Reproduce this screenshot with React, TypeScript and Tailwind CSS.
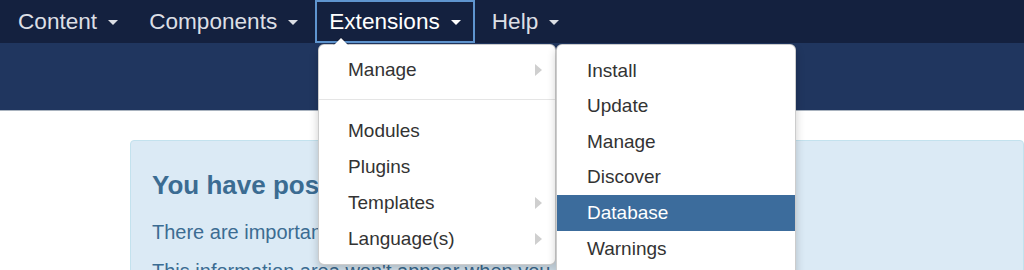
const navItems = [
  { label: "Content", active: false },
  { label: "Components", active: false },
  { label: "Extensions", active: true },
  { label: "Help", active: false },
];

const mainMenu = ["Modules", "Plugins", "Templates", "Language(s)"];
const withSub = ["Templates", "Language(s)"];
const subMenu = ["Install", "Update", "Manage", "Discover", "Database", "Warnings"];

function Caret({ light }: { light: boolean }) {
  return (
    <span
      className={
        "ml-[11px] mt-[2px] inline-block h-0 w-0 border-x-[5px] border-t-[5px] border-x-transparent " +
        (light ? "border-t-white" : "border-t-[#dcdfe5]")
      }
    />
  );
}

function SubArrow() {
  return (
    <span className="inline-block h-0 w-0 border-y-[6px] border-l-[7px] border-y-transparent border-l-[#cfcfcf]" />
  );
}

export default function App() {
  return (
    <div
      className="relative h-[270px] w-[1024px] overflow-hidden bg-white"
      style={{ fontFamily: '"Liberation Sans", Arial, sans-serif' }}
    >
      {/* top navbar */}
      <nav className="flex h-[43px] items-stretch bg-[#14213f] pl-[4px]">
        {navItems.map((item) => (
          <div
            key={item.label}
            className={
              "mr-[3px] flex items-center border-2 px-[12px] text-[22.6px] " +
              (item.active
                ? "border-[#5f95cf] text-white"
                : "border-transparent text-[#dcdfe5]")
            }
          >
            {item.label}
            <Caret light={item.active} />
          </div>
        ))}
      </nav>

      {/* header strip */}
      <div className="h-[68px] border-b border-[#a9b3bf] bg-[#20365f]" />

      {/* alert */}
      <div className="ml-[130px] mt-[29px] rounded-[4px] border border-[#c3e2ee] bg-[#dbeaf5] pl-[21px] pt-[29px] text-[#3b6c92]">
        <h2 className="h-[30px] text-[26px] font-bold leading-[30px] whitespace-nowrap">
          You have post-installation messages
        </h2>
        <p className="mt-[18px] text-[20px] leading-[28px] whitespace-nowrap">
          There are important post-installation messages
        </p>
        <p className="mt-[11px] text-[20px] leading-[28px] whitespace-nowrap">
          This information area won't appear when you hide all
        </p>
      </div>

      {/* Extensions dropdown */}
      <div className="absolute left-[318px] top-[44px] w-[238px] rounded-[6px] border border-[rgba(0,0,0,0.2)] bg-white pb-[7px] pt-[7px] text-[19px] text-[#333] shadow-[0_5px_10px_rgba(0,0,0,0.2)]">
        <span className="absolute -top-[8px] left-[14px] h-0 w-0 border-x-[8px] border-b-[8px] border-x-transparent border-b-[rgba(0,0,0,0.2)]" />
        <span className="absolute -top-[7px] left-[15px] h-0 w-0 border-x-[7px] border-b-[7px] border-x-transparent border-b-white" />
        <div className="flex h-[36px] items-center justify-between pl-[29px] pr-[13px]">
          <span>Manage</span>
          <SubArrow />
        </div>
        <div className="mb-[13px] mt-[11px] h-px bg-[#e5e5e5]" />
        {mainMenu.map((m) => (
          <div key={m} className="flex h-[36px] items-center justify-between pl-[29px] pr-[13px]">
            <span>{m}</span>
            {withSub.includes(m) && <SubArrow />}
          </div>
        ))}
      </div>

      {/* Manage submenu */}
      <div className="absolute left-[556px] top-[44px] h-[260px] w-[240px] rounded-[6px] border border-[rgba(0,0,0,0.2)] bg-white pt-[8px] text-[19px] text-[#333] shadow-[0_5px_10px_rgba(0,0,0,0.2)]">
        {subMenu.map((s) => (
          <div
            key={s}
            className={
              "flex h-[35.6px] items-center pl-[30px] " +
              (s === "Database" ? "bg-[#3c6c9c] text-white" : "")
            }
          >
            {s}
          </div>
        ))}
      </div>
    </div>
  );
}
